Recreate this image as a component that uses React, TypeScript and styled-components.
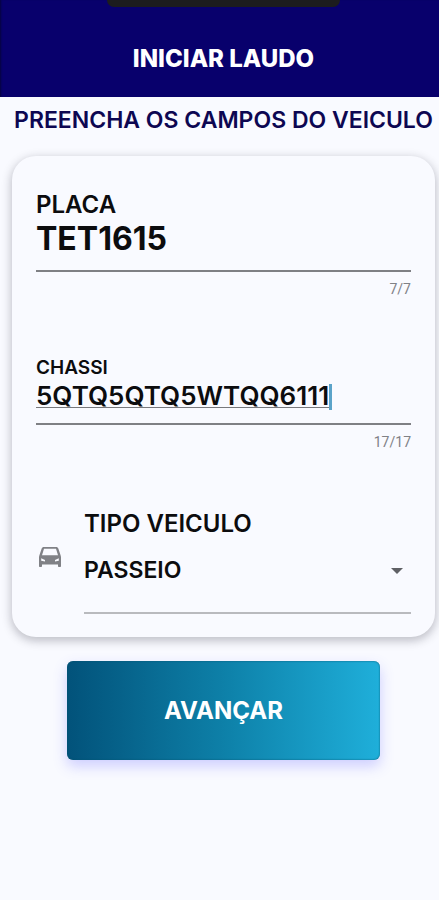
import React, { useState } from "react";
import styled, { createGlobalStyle } from "styled-components";

const GlobalStyle = createGlobalStyle`
  *, *::before, *::after { box-sizing: border-box; }
  body {
    margin: 0;
    min-height: 100vh;
    background: #f9faff;
    color: #0c0c0e;
    font-family: "Inter", "Liberation Sans", sans-serif;
  }
`;

const Header = styled.header`
  display: flex;
  flex-direction: column;
  align-items: center;
  height: 97px;
  padding-left: 8px;
  background: #08006c;
  box-shadow: inset 2px 0 2px -1px #06043f;
`;

const Notch = styled.div`
  width: 54%;
  height: 7px;
  border-radius: 0 0 16px 16px;
  background: #1c1c1e;
`;

const Title = styled.h1`
  margin: 36px 0 0;
  color: #ffffff;
  font-size: 24px;
  line-height: 32px;
  font-weight: 800;
`;

const Main = styled.main`
  display: flex;
  flex-direction: column;
  align-items: center;
  padding: 7px 4px 24px 12px;
`;

const Heading = styled.h2`
  margin: 0;
  color: #0d0752;
  font-size: 23px;
  line-height: 32px;
  font-weight: 600;
  white-space: nowrap;
`;

const Card = styled.form`
  width: 100%;
  margin-top: 20px;
  padding: 35px 24px 23px;
  border-radius: 24px;
  background: #f9faff;
  box-shadow: 0 3px 10px 1px rgba(40, 40, 55, 0.28);
`;

const Field = styled.div<{ $gap: number }>`
  display: flex;
  flex-direction: column;
  margin-bottom: ${(p) => p.$gap}px;
`;

const Label = styled.label<{ $small?: boolean }>`
  font-size: ${(p) => (p.$small ? 19 : 24)}px;
  line-height: ${(p) => (p.$small ? 24 : 28)}px;
  font-weight: 600;
`;

const InputLine = styled.div<{ $pad: number }>`
  display: flex;
  align-items: flex-start;
  padding-bottom: ${(p) => p.$pad}px;
  border-bottom: 2px solid #7f8084;
`;

const Input = styled.input<{ $composing?: boolean }>`
  min-width: 0;
  width: ${(p) => (p.$composing ? "auto" : "100%")};
  field-sizing: ${(p) => (p.$composing ? "content" : "fixed")};
  height: ${(p) => (p.$composing ? 28 : 40)}px;
  padding: ${(p) => (p.$composing ? "3px 0 0" : "0")};
  border: 0;
  border-bottom: ${(p) => (p.$composing ? "1px solid #77787c" : "0")};
  outline: 0;
  background: transparent;
  color: inherit;
  font: inherit;
  font-size: ${(p) => (p.$composing ? 26 : 32)}px;
  line-height: ${(p) => (p.$composing ? 24 : 40)}px;
  font-weight: ${(p) => (p.$composing ? 600 : 700)};
`;

const Caret = styled.span`
  flex: none;
  width: 3px;
  height: 26px;
  margin-top: 4px;
  background: #5ba3c9;
`;

const Counter = styled.output`
  align-self: flex-end;
  margin-top: 7px;
  color: #808186;
  font-family: Roboto, sans-serif;
  font-size: 14px;
  line-height: 20px;
`;

const SelectRow = styled.div`
  display: flex;
  align-items: center;
`;

const CarIcon = styled.svg`
  flex: none;
  margin: 0 23px 10px 3px;
`;

const SelectField = styled.div`
  display: flex;
  flex: 1;
  flex-direction: column;
  min-width: 0;
  border-bottom: 2px solid #b9babe;
`;

const SelectBox = styled.div`
  display: flex;
  align-items: center;
  margin: 16px 0 26px;
`;

const Select = styled.select`
  flex: 1;
  min-width: 0;
  height: 32px;
  margin-right: -26px;
  padding: 0 26px 0 0;
  border: 0;
  outline: 0;
  appearance: none;
  background: transparent;
  color: inherit;
  font: inherit;
  font-size: 23px;
  font-weight: 600;
`;

const Arrow = styled.svg`
  flex: none;
  margin: 2px 8px 0 6px;
  pointer-events: none;
`;

const Submit = styled.button`
  width: 74%;
  height: 99px;
  margin-top: 24px;
  border: 0;
  border-radius: 6px;
  background: linear-gradient(90deg, #02527a 0%, #0e82aa 52%, #1fafda 100%);
  box-shadow: 0 6px 14px rgba(90, 90, 255, 0.28), inset 0 0 2px #06546f;
  color: #ffffff;
  font: inherit;
  font-size: 24px;
  font-weight: 700;
`;

export default function App() {
  const [plate, setPlate] = useState("TET1615");
  const [chassis, setChassis] = useState("5QTQ5QTQ5WTQQ6111");

  return (
    <>
      <GlobalStyle />
      <Header>
        <Notch />
        <Title>INICIAR LAUDO</Title>
      </Header>
      <Main>
        <Heading>PREENCHA OS CAMPOS DO VEICULO</Heading>
        <Card id="vehicle" onSubmit={(e) => e.preventDefault()}>
          <Field $gap={57}>
            <Label htmlFor="plate">PLACA</Label>
            <InputLine $pad={11}>
              <Input
                id="plate"
                value={plate}
                maxLength={7}
                onChange={(e) => setPlate(e.target.value.toUpperCase())}
              />
            </InputLine>
            <Counter htmlFor="plate">{plate.length}/7</Counter>
          </Field>
          <Field $gap={58}>
            <Label htmlFor="chassis" $small>CHASSI</Label>
            <InputLine $pad={13}>
              <Input
                id="chassis"
                $composing
                value={chassis}
                maxLength={17}
                onChange={(e) => setChassis(e.target.value.toUpperCase())}
              />
              <Caret />
            </InputLine>
            <Counter htmlFor="chassis">{chassis.length}/17</Counter>
          </Field>
          <SelectRow>
            <CarIcon width="22" height="20" viewBox="0 0 22 20" aria-hidden>
              <path
                fill="#808186"
                fillRule="evenodd"
                d="M5 0h12c1.200 0 2.100.600 2.400 1.700L21.500 8c.300.800.500 1.500.500 2.400V19c0 .600-.400 1-1 1h-1c-.600 0-1-.400-1-1v-1.500H3V19c0 .600-.400 1-1 1H1c-.600 0-1-.400-1-1v-8.600C0 9.500.200 8.800.500 8l2.100-6.300C2.900.600 3.800 0 5 0zM5 1.700 3 8.300h16L17 1.700zM2.200 11.200v2.600l3.800.700v-1.600zM19.800 11.200 16 12.900v1.600l3.800-.700z"
              />
            </CarIcon>
            <SelectField>
              <Label htmlFor="type">TIPO VEICULO</Label>
              <SelectBox>
                <Select id="type" defaultValue="PASSEIO">
                  <option>PASSEIO</option>
                </Select>
                <Arrow width="12" height="6" viewBox="0 0 12 6" aria-hidden>
                  <path d="M0 0h12L6 6z" fill="#5f6065" />
                </Arrow>
              </SelectBox>
            </SelectField>
          </SelectRow>
        </Card>
        <Submit type="submit" form="vehicle">AVANÇAR</Submit>
      </Main>
    </>
  );
}
